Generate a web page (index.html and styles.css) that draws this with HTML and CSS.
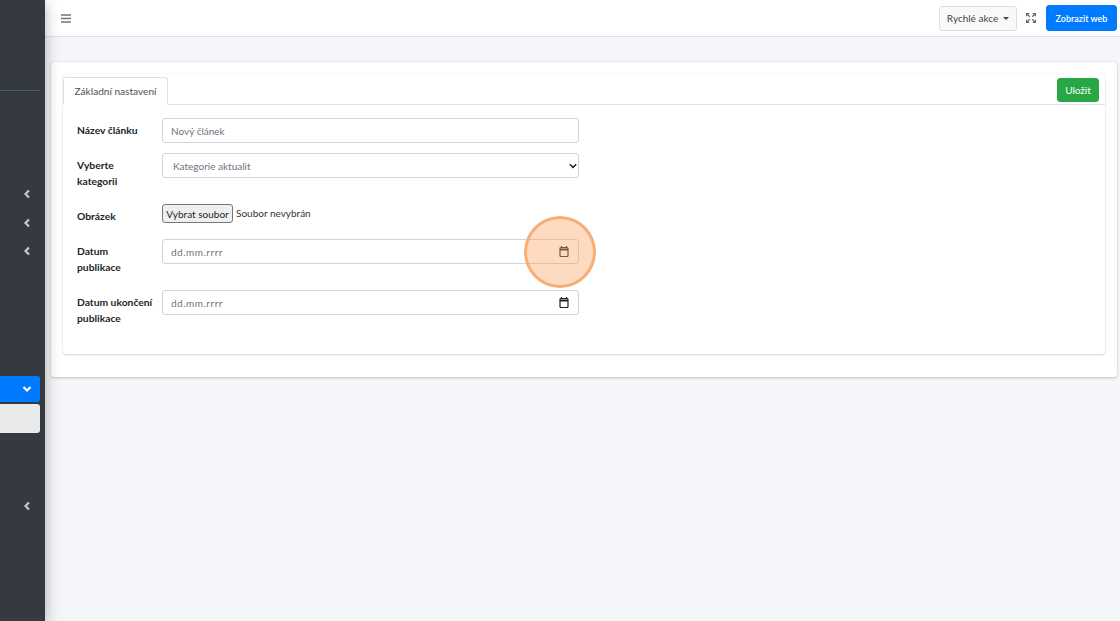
FILE: index.html
```html
<!DOCTYPE html>
<html lang="cs">
<head>
<meta charset="utf-8">
<title>Nový článek</title>
<link rel="stylesheet" href="styles.css">
</head>
<body>
<div class="app">
  <aside class="sidebar">
    <div class="side-divider"></div>
    <div class="side-item first"><svg class="chev" viewBox="0 0 8 10"><path d="M6 1.500 2.500 5 6 8.500"/></svg></div>
    <div class="side-item"><svg class="chev" viewBox="0 0 8 10"><path d="M6 1.500 2.500 5 6 8.500"/></svg></div>
    <div class="side-item"><svg class="chev" viewBox="0 0 8 10"><path d="M6 1.500 2.500 5 6 8.500"/></svg></div>
    <div class="side-active"><svg class="chev-down" viewBox="0 0 10 8"><path d="M1.500 2 5 5.500 8.500 2"/></svg></div>
    <div class="side-sub"></div>
    <div class="side-item last"><svg class="chev" viewBox="0 0 8 10"><path d="M6 1.500 2.500 5 6 8.500"/></svg></div>
  </aside>
  <div class="main">
    <header class="topbar">
      <svg class="burger" viewBox="0 0 10 9"><path d="M0 1h10M0 4.500h10M0 8h10"/></svg>
      <div class="top-right">
        <button class="quick">Rychlé akce<span class="caret"></span></button>
        <svg class="expand" viewBox="0 0 12 12"><path d="M0 0h4.500L0 4.500zM12 0H7.500L12 4.500zM0 12h4.500L0 7.500zM12 12H7.500L12 7.500z"/><path class="expand-line" d="M2 2l2.500 2.500M10 2L7.500 4.500M2 10l2.500-2.500M10 10L7.500 7.500"/></svg>
        <button class="web">Zobrazit web</button>
      </div>
    </header>
    <main class="content">
      <section class="outer-card">
        <div class="inner-card">
          <div class="tabs">
            <div class="tab">Základní nastavení</div>
            <button class="save">Uložit</button>
          </div>
          <form class="form">
            <div class="row">
              <label class="lbl">Název článku</label>
              <input class="control" type="text" value="Nový článek">
            </div>
            <div class="row">
              <label class="lbl">Vyberte<br>kategorii</label>
              <select class="control select"><option>Kategorie aktualit</option></select>
            </div>
            <div class="row">
              <label class="lbl">Obrázek</label>
              <div class="file"><button type="button" class="file-btn">Vybrat soubor</button><span class="file-name">Soubor nevybrán</span></div>
            </div>
            <div class="row">
              <label class="lbl">Datum<br>publikace</label>
              <div class="control date"><span>dd.mm.rrrr</span><svg class="cal" viewBox="0 0 10 11"><path d="M2.500 0v2M7.500 0v2"/><rect x="1" y="1.500" width="8" height="9" rx="1"/><path class="cal-bar" d="M1 3.500h8"/></svg></div>
            </div>
            <div class="row">
              <label class="lbl">Datum ukončení<br>publikace</label>
              <div class="control date"><span>dd.mm.rrrr</span><svg class="cal" viewBox="0 0 10 11"><path d="M2.500 0v2M7.500 0v2"/><rect x="1" y="1.500" width="8" height="9" rx="1"/><path class="cal-bar" d="M1 3.500h8"/></svg></div>
            </div>
          </form>
        </div>
      </section>
    </main>
  </div>
</div>
<div class="spot"></div>
</body>
</html>
```
FILE: styles.css
```css
* { box-sizing: border-box; }
html, body { margin: 0; height: 100%; overflow: hidden; }
body { font-family: Lato, "Noto Sans", sans-serif; font-size: 10px; color: #212529; background: #f4f6f9; position: relative; }
button, input, select { font-family: inherit; }
.app { display: flex; height: 621px; }
.sidebar { width: 45px; flex: none; background: #343a40; display: flex; flex-direction: column; align-items: flex-end; box-shadow: 0 4px 14px rgba(0,0,0,.3); z-index: 2; }
.side-divider { width: 40px; height: 1px; flex: none; background: #4f5962; margin: 90px 5px 0 0; }
.side-item { width: 100%; height: 28.5px; flex: none; display: flex; align-items: center; justify-content: flex-end; padding-right: 14px; }
.side-item.first { margin-top: 89px; }
.side-item.last { margin-top: 59px; }
.chev { width: 8px; height: 10px; }
.chev path, .chev-down path { fill: none; stroke: #c2c7d0; stroke-width: 2.200; }
.chev-down path { stroke: #fff; }
.side-active { width: 40px; height: 26px; flex: none; margin: 110px 5px 0 0; background: #007bff; border-radius: 0 3px 3px 0; display: flex; align-items: center; justify-content: flex-end; padding-right: 8px; }
.chev-down { width: 10px; height: 8px; }
.side-sub { width: 40px; height: 29px; flex: none; margin: 2px 5px 0 0; background: #e9eaea; border-radius: 0 3px 3px 0; }
.main { flex: 1; min-width: 0; display: flex; flex-direction: column; }
.topbar { height: 37px; background: #fff; border-bottom: 1px solid #dee2e6; display: flex; align-items: center; justify-content: space-between; padding: 0 3px 0 16px; }
.burger { width: 10px; height: 9px; }
.burger path { stroke: #6c757d; stroke-width: 1.400; fill: none; }
.top-right { display: flex; align-items: center; }
.quick { height: 25px; width: 78px; padding: 0; background: #f8f9fa; border: 1px solid #ddd; border-radius: 3px; color: #444; font-size: 10px; display: flex; align-items: center; justify-content: center; }
.caret { width: 0; height: 0; border: 3px solid transparent; border-top-color: #444; border-bottom: 0; margin-left: 5px; }
.expand { width: 10px; height: 10px; margin: 0 10px 0 9px; }
.expand path { fill: #5f6870; }
.expand .expand-line { stroke: #5f6870; stroke-width: 1.500; fill: none; }
.web { width: 71px; height: 26px; padding: 0; background: #007bff; border: 1px solid #007bff; border-radius: 3px; color: #fff; font-size: 9px; font-weight: 600; }
.content { flex: 1; padding: 25px 3px 0 6px; }
.outer-card { height: 315px; background: #fff; border-radius: 3px; box-shadow: 0 0 1px rgba(0,0,0,.2), 0 1px 3px rgba(0,0,0,.2); padding: 12px; }
.inner-card { height: 280px; border-radius: 3px; box-shadow: 0 0 1px rgba(0,0,0,.2), 0 1px 2px rgba(0,0,0,.15); }
.tabs { height: 31px; padding: 3px 6px 0 0; display: flex; justify-content: space-between; align-items: flex-start; border-bottom: 1px solid #dee2e6; }
.tab { width: 105px; height: 28px; background: #fff; border: 1px solid #dee2e6; border-bottom-color: #fff; border-radius: 3px 3px 0 0; color: #495057; font-size: 10.100px; line-height: 27px; text-align: center; }
.save { width: 42px; height: 24px; margin-top: 1px; padding: 0; background: #28a745; border: 1px solid #28a745; border-radius: 3px; color: #fff; font-size: 10px; }
.form { padding: 13px 14px 0; }
.row { display: flex; align-items: flex-start; margin-bottom: 10px; }
.lbl { width: 85px; flex: none; font-weight: 700; font-size: 10.300px; line-height: 16px; padding: 4px 0 5px; color: #212529; }
.control { width: 417px; height: 25px; background: #fff; border: 1px solid #ced4da; border-radius: 3px; color: #6c757d; font-size: 10px; padding: 0 8px; outline: 0; }
.select { padding: 0 10px; appearance: none; background-image: url("data:image/svg+xml,%3Csvg xmlns='http://www.w3.org/2000/svg' viewBox='0 0 8 6'%3E%3Cpath d='M.8 1.200 4 4.400l3.200-3.200' fill='none' stroke='%23222' stroke-width='1.500'/%3E%3C/svg%3E"); background-repeat: no-repeat; background-position: right 1px center; background-size: 8px 6px; }
.file { display: flex; align-items: flex-start; height: 25px; }
.file-btn { width: 71px; height: 19px; padding: 0; background: #efefef; border: 1px solid #767676; border-radius: 3px; color: #212529; font-size: 10px; }
.file-name { margin-left: 3px; font-size: 10px; line-height: 19px; color: #333; }
.date { display: flex; align-items: center; justify-content: space-between; padding-right: 9px; letter-spacing: .5px; }
.cal { width: 10px; height: 11px; }
.cal path { stroke: #222; stroke-width: 1.200; fill: none; }
.cal rect { fill: none; stroke: #222; stroke-width: 1.200; }
.cal .cal-bar { stroke-width: 2; }
.spot { position: absolute; left: 524px; top: 216px; width: 72px; height: 72px; border-radius: 50%; background: rgba(253,168,105,.42); border: 3px solid rgba(245,170,110,.9); }
```
